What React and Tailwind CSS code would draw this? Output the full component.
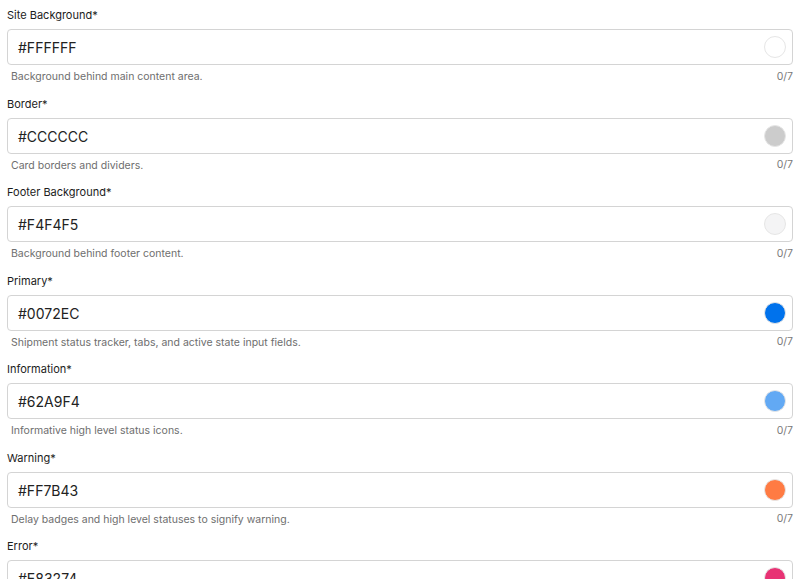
const fields = [
  { label: "Site Background", value: "#FFFFFF", help: "Background behind main content area." },
  { label: "Border", value: "#CCCCCC", help: "Card borders and dividers." },
  { label: "Footer Background", value: "#F4F4F5", help: "Background behind footer content." },
  { label: "Primary", value: "#0072EC", help: "Shipment status tracker, tabs, and active state input fields." },
  { label: "Information", value: "#62A9F4", help: "Informative high level status icons." },
  { label: "Warning", value: "#FF7B43", help: "Delay badges and high level statuses to signify warning." },
  { label: "Error", value: "#E83274", help: "Error states and critical alerts." },
];

function ColorField({ label, value, help }) {
  return (
    <div className="mb-[11.5px]">
      <div className="text-[11px] leading-4 text-[#1c1c1c]">{label}*</div>
      <div className="mt-[6px] flex h-9 items-center justify-between rounded-[4px] border border-[#d4d4d4] bg-white pl-[10px] pr-[6px]">
        <span className="pt-px text-[14px] text-[#222]">{value}</span>
        <span
          className="h-[22px] w-[22px] rounded-full border border-[#e6e6e6]"
          style={{ backgroundColor: value }}
        />
      </div>
      <div className="mt-[5px] flex h-[14px] items-center justify-between pl-1 text-[10.5px] leading-[14px]">
        <span className="text-[#6e6e6e]">{help}</span>
        <span className="-mt-px text-[#7a7a7a]">0/7</span>
      </div>
    </div>
  );
}

export default function App() {
  return (
    <div
      className="h-[579px] overflow-hidden bg-white px-[7px] pt-[7px]"
      style={{ fontFamily: "Inter, 'Noto Sans', sans-serif" }}
    >
      {fields.map((f) => (
        <ColorField key={f.label} {...f} />
      ))}
    </div>
  );
}
